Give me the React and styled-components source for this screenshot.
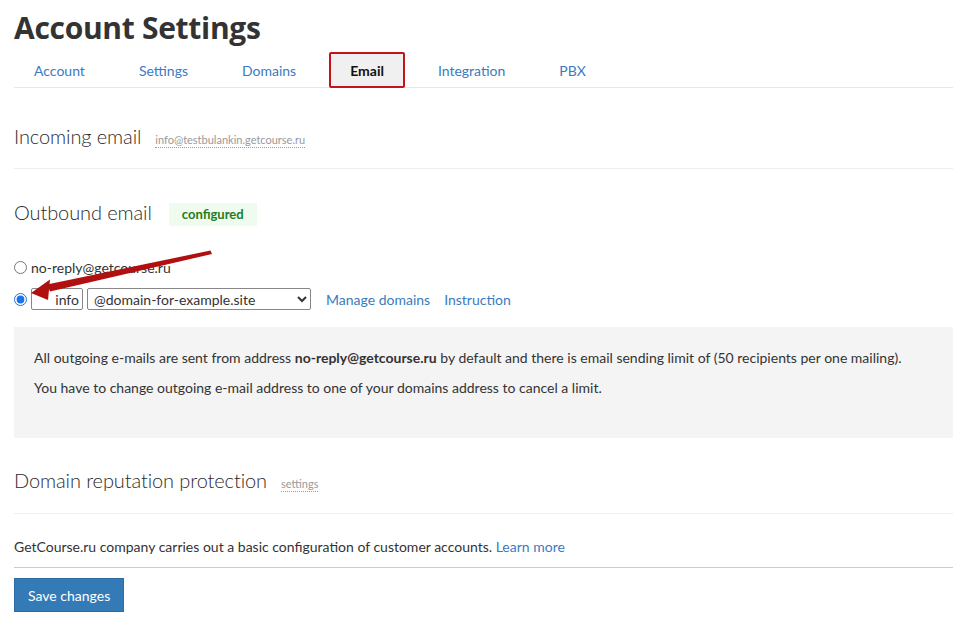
import React from 'react';
import styled, { createGlobalStyle } from 'styled-components';

const GlobalStyle = createGlobalStyle`
  html, body {
    margin: 0;
    padding: 0;
    background: #fff;
  }
  body {
    font-family: Lato, 'Open Sans', 'Liberation Sans', sans-serif;
    color: #333;
    font-size: 14px;
  }
`;

const Page = styled.div`
  position: relative;
  padding: 8px 14px 0 14px;
  width: 939px;
`;

const Title = styled.h1`
  margin: 0;
  font-family: 'Open Sans', sans-serif;
  font-size: 30px;
  font-weight: 700;
  line-height: 40px;
  color: #333;
  letter-spacing: -0.3px;
`;

const Tabs = styled.ul`
  list-style: none;
  margin: 5px 0 0 0;
  padding: 0;
  display: flex;
  border-bottom: 1px solid #e8e8e8;
  height: 34px;
`;

const Tab = styled.li`
  margin-right: 14px;
  padding: 0 20px;
  display: flex;
  align-items: center;
  font-size: 14px;
  color: ${({ active }) => (active ? '#111' : '#3a7bbf')};
  font-weight: ${({ active }) => (active ? 700 : 400)};
  background: ${({ active }) => (active ? '#f0f0f0' : 'transparent')};
  outline: ${({ active }) => (active ? '2px solid #c4141b' : 'none')};
  outline-offset: -1px;
  border-radius: 1px;
  height: 34px;
  box-sizing: border-box;
`;

const Section = styled.div`
  padding: ${({ pad }) => pad || '36px 0 20px'};
  border-bottom: ${({ noline }) => (noline ? 'none' : '1px solid #eee')};
`;

const SectionHead = styled.div`
  display: flex;
  align-items: baseline;
  gap: 14px;
`;

const Heading = styled.h3`
  margin: 0;
  font-size: 20px;
  font-weight: 300;
  color: #2b2b2b;
  line-height: 26px;
  letter-spacing: -0.1px;
`;

const DottedLink = styled.span`
  font-size: 11px;
  color: #999;
  border-bottom: 1px dotted #999;
  line-height: 14px;
`;

const Badge = styled.span`
  font-size: 13px;
  font-weight: 700;
  color: #1d7d1d;
  background: #f0fbf0;
  padding: 3px 13px 4px;
  margin-left: 3px;
  position: relative;
  top: -1px;
`;

const RadioRow = styled.label`
  display: flex;
  align-items: center;
  gap: 4px;
  font-size: 14px;
  color: #333;
  height: ${({ h }) => h || '22px'};
`;

const Radio = styled.input`
  margin: 0;
  width: 13px;
  height: 13px;
  accent-color: #1a73e8;
`;

const TextInput = styled.input`
  width: 52px;
  height: 22px;
  box-sizing: border-box;
  border: 1px solid #888;
  border-radius: 2px;
  text-align: right;
  font-family: inherit;
  font-size: 14px;
  padding: 0 3px;
  color: #333;
`;

const Select = styled.select`
  width: 224px;
  height: 22px;
  box-sizing: border-box;
  border: 1px solid #888;
  border-radius: 2px;
  font-family: inherit;
  font-size: 14px;
  color: #333;
  background: #fff;
  padding: 0 2px;
`;

const Link = styled.a`
  color: #3a7bbf;
  text-decoration: none;
  font-size: 14px;
  margin-left: ${({ ml }) => ml || '0'};
`;

const InfoBox = styled.div`
  background: #f4f4f4;
  margin: 7px 0 0 0;
  padding: 22px 20px 42px;
  font-size: 14px;
  color: #333;
  p {
    margin: 0 0 13px;
    line-height: 17px;
  }
  p:last-child {
    margin: 0;
  }
  b {
    font-weight: 700;
  }
`;

const Note = styled.div`
  padding: 24px 0 12px;
  border-bottom: 1px solid #ccc;
  font-size: 14px;
  color: #333;
`;

const SaveButton = styled.button`
  margin-top: 10px;
  background: #337ab7;
  color: #fff;
  border: 1px solid #2e6da4;
  font-family: inherit;
  font-size: 14px;
  height: 34px;
  padding: 0 13px;
  border-radius: 0;
`;

const ArrowOverlay = styled.svg`
  position: absolute;
  left: 0;
  top: 0;
  pointer-events: none;
`;

const tabs = ['Account', 'Settings', 'Domains', 'Email', 'Integration', 'PBX'];

export default function App() {
  return (
    <>
      <GlobalStyle />
      <Page>
        <Title>Account Settings</Title>
        <Tabs>
          {tabs.map((t) => (
            <Tab key={t} active={t === 'Email'}>
              {t}
            </Tab>
          ))}
        </Tabs>

        <Section pad="35px 0 19px">
          <SectionHead>
            <Heading>Incoming email</Heading>
            <DottedLink>info@testbulankin.getcourse.ru</DottedLink>
          </SectionHead>
        </Section>

        <Section pad="30px 0 0" noline>
          <SectionHead>
            <Heading>Outbound email</Heading>
            <Badge>configured</Badge>
          </SectionHead>
          <div style={{ height: 29 }} />
          <RadioRow>
            <Radio type="radio" name="from" />
            no-reply@getcourse.ru
          </RadioRow>
          <RadioRow h="42px">
            <Radio type="radio" name="from" defaultChecked />
            <TextInput defaultValue="info" />
            <Select defaultValue="d">
              <option value="d">@domain-for-example.site</option>
            </Select>
            <Link ml="11px">Manage domains</Link>
            <Link ml="10px">Instruction</Link>
          </RadioRow>
          <InfoBox>
            <p>
              All outgoing e-mails are sent from address <b>no-reply@getcourse.ru</b> by default
              and there is email sending limit of (50 recipients per one mailing).
            </p>
            <p>You have to change outgoing e-mail address to one of your domains address to cancel a limit.</p>
          </InfoBox>
        </Section>

        <Section pad="29px 0 20px">
          <SectionHead>
            <Heading>Domain reputation protection</Heading>
            <DottedLink>settings</DottedLink>
          </SectionHead>
        </Section>

        <Note>
          GetCourse.ru company carries out a basic configuration of customer accounts.{' '}
          <Link style={{ fontSize: 'inherit' }}>Learn more</Link>
        </Note>
        <SaveButton>Save changes</SaveButton>

        <ArrowOverlay width="967" height="642" viewBox="0 0 967 642">
          <polygon points="210.5,250.5 212,254 50,291.5 47,284.5" fill="#b01010" />
          <polygon points="31,293 50,279.5 48,300" fill="#b01010" />
        </ArrowOverlay>
      </Page>
    </>
  );
}
